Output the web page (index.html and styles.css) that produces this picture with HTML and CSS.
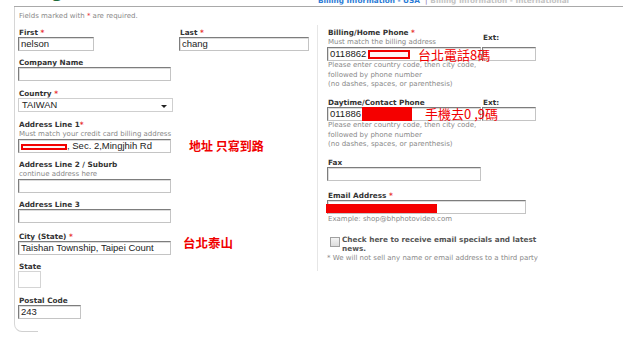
FILE: index.html
```html
<!DOCTYPE html>
<html>
<head>
<meta charset="utf-8">
<link rel="stylesheet" href="styles.css">
</head>
<body>
<div class="topbar">
  <div class="title-slot"><span class="title">Billing</span></div>
  <div class="nav"><span class="nav-on">Billing Information - USA</span><span class="nav-sep">|</span><span class="nav-off">Billing Information - International</span></div>
</div>
<div class="panel">
  <div class="panel-body">
    <p class="note">Fields marked with <span class="req">*</span> are required.</p>
    <div class="cols">
      <div class="col-left">
        <div class="name-row">
          <div class="field w-first-slot">
            <div class="lbl">First <span class="req">*</span></div>
            <div class="inp w-first">nelson</div>
          </div>
          <div class="field">
            <div class="lbl">Last <span class="req">*</span></div>
            <div class="inp w-last">chang</div>
          </div>
        </div>
        <div class="field mb9">
          <div class="lbl">Company Name</div>
          <div class="inp w-wide"></div>
        </div>
        <div class="field mb9">
          <div class="lbl">Country <span class="req">*</span></div>
          <div class="sel"><span>TAIWAN</span><span class="arrow"></span></div>
        </div>
        <div class="field ann-host">
          <div class="lbl">Address Line 1<span class="req">*</span></div>
          <div class="hint">Must match your credit card billing address</div>
          <div class="inp w-wide"><span class="redact-box addr-box"></span>, Sec. 2,Mingjhih Rd</div>
          <span class="ann ann-bold ann-addr">地址 只寫到路</span>
        </div>
        <div class="field">
          <div class="lbl">Address Line 2 / Suburb</div>
          <div class="hint">continue address here</div>
          <div class="inp w-wide"></div>
        </div>
        <div class="field mb10">
          <div class="lbl">Address Line 3</div>
          <div class="inp w-wide"></div>
        </div>
        <div class="field ann-host">
          <div class="lbl">City (State) <span class="req">*</span></div>
          <div class="inp w-wide">Taishan Township, Taipei Count</div>
          <span class="ann ann-bold ann-city">台北泰山</span>
        </div>
        <div class="field mb9">
          <div class="lbl">State</div>
          <div class="inp-light"></div>
        </div>
        <div class="field mb0">
          <div class="lbl">Postal Code</div>
          <div class="inp w-postal">243</div>
        </div>
      </div>
      <div class="col-right">
        <div class="rfield ann-host">
          <div class="phone-row">
            <div class="phone-main">
              <div class="lbl">Billing/Home Phone <span class="req">*</span></div>
              <div class="hint">Must match the billing address</div>
              <div class="inp w-phone">0118862<span class="redact-box phone-box"></span></div>
            </div>
            <div class="phone-ext">
              <div class="lbl ext-lbl-a">Ext:</div>
              <div class="inp w-ext"></div>
            </div>
          </div>
          <div class="hint2">Please enter country code, then city code,<br>followed by phone number<br>(no dashes, spaces, or parenthesis)</div>
          <span class="ann ann-phone">台北電話8碼</span>
        </div>
        <div class="rfield ann-host">
          <div class="phone-row">
            <div class="phone-main">
              <div class="lbl">Daytime/Contact Phone</div>
              <div class="inp w-phone">011886<span class="redact-fill day-fill"></span></div>
            </div>
            <div class="phone-ext">
              <div class="lbl">Ext:</div>
              <div class="inp w-ext"></div>
            </div>
          </div>
          <div class="hint2">Please enter country code, then city code,<br>followed by phone number<br>(no dashes, spaces, or parenthesis)</div>
          <span class="ann ann-mobile">手機去0 ,9碼</span>
        </div>
        <div class="rfield fax">
          <div class="lbl">Fax</div>
          <div class="inp w-phone"></div>
        </div>
        <div class="rfield email">
          <div class="lbl">Email Address <span class="req">*</span></div>
          <div class="inp w-email"><span class="redact-fill email-fill"></span></div>
          <div class="hint">Example: shop@bhphotovideo.com</div>
        </div>
        <div class="check-row">
          <span class="checkbox"></span>
          <span class="check-text">Check here to receive email specials and latest news.</span>
        </div>
        <div class="privacy">* We will not sell any name or email address to a third party</div>
      </div>
    </div>
  </div>
  <div class="foot"></div>
</div>
</body>
</html>
```

FILE: styles.css
```css
* { box-sizing: border-box; margin: 0; padding: 0; }
html, body { background: #fff; }
body {
  width: 640px;
  height: 348px;
  overflow: hidden;
  font-family: "DejaVu Sans", Verdana, sans-serif;
  color: #333;
}

/* top bar, mostly cut off */
.topbar {
  height: 6px;
  overflow: hidden;
  display: flex;
  align-items: flex-end;
}
.title-slot {
  flex: 0 0 318px;
  padding-left: 6px;
  margin-bottom: 4.5px;
}
.title {
  font-size: 16px;
  line-height: 16px;
  font-weight: bold;
  color: #1e6b3c;
}
.nav {
  font-size: 7.3px;
  line-height: 9px;
  font-weight: bold;
  white-space: nowrap;
  margin-bottom: 1.5px;
}
.nav-on { color: #2b7bd6; }
.nav-sep { color: #8a6db0; font-weight: normal; margin: 0 3px 0 5px; }
.nav-off { color: #c4c4c4; }

/* panel */
.panel {
  margin-left: 14px;
  width: 609px;
  border-top: 1px solid #a9a9a9;
}
.panel-body {
  border-left: 1px solid #d6d6d6;
}
.foot {
  width: 24px;
  height: 13px;
  border-left: 1px solid #d6d6d6;
  border-bottom: 1px solid #d0d0d0;
  border-bottom-left-radius: 8px;
}
.note {
  font-size: 7px;
  line-height: 8px;
  color: #888;
  padding: 5px 0 0 4px;
  margin-bottom: 5px;
}
.req { color: #e83030; }

.cols { display: flex; }
.col-left {
  width: 302px;
  padding: 4px 0 0 3px;
}
.col-right {
  flex: 1;
  align-self: flex-start;
  border-left: 1px solid #e6e6e6;
  padding: 4px 0 8px 9px;
}

.lbl {
  font-size: 7.3px;
  line-height: 8px;
  font-weight: bold;
  color: #333;
  padding-left: 1px;
  white-space: nowrap;
}
.hint {
  font-size: 7px;
  line-height: 10px;
  color: #888;
  padding-left: 1px;
  white-space: nowrap;
}
.hint2 {
  font-size: 7px;
  line-height: 9.5px;
  color: #888;
  padding-left: 1px;
  white-space: nowrap;
}

.field { margin-bottom: 8px; }
.mb9 { margin-bottom: 9px; }
.mb10 { margin-bottom: 10px; }
.mb0 { margin-bottom: 0; }
.name-row { display: flex; margin-bottom: 8px; }
.name-row .field { margin-bottom: 0; }
.w-first-slot { width: 161px; }

.inp {
  height: 14px;
  border: 1px solid #c4c4c4;
  border-top-color: #7d7d7d;
  border-left-color: #7d7d7d;
  box-shadow: inset 1px 1px 0 #dcdcdc;
  font-family: "Liberation Sans", Arial, sans-serif;
  font-size: 9.5px;
  line-height: 12px;
  padding-left: 2px;
  color: #222;
  white-space: nowrap;
  overflow: visible;
  display: flex;
  align-items: center;
  background: #fff;
}
.inp-light {
  width: 23px;
  height: 17px;
  border: 1px solid #d4d4d4;
  background: #fff;
}
.w-first { width: 76px; }
.w-last { width: 130px; }
.w-wide { width: 153px; }
.w-postal { width: 63px; }
.w-phone { width: 154px; }
.w-ext { width: 54px; }
.w-email { width: 199px; }

.sel {
  width: 155px;
  height: 14px;
  border: 1px solid #cfcfcf;
  background: #fff;
  font-family: "Liberation Sans", Arial, sans-serif;
  font-size: 9.3px;
  line-height: 12px;
  padding: 0 5px 0 3px;
  color: #222;
  display: flex;
  justify-content: space-between;
  align-items: center;
}
.arrow {
  width: 0;
  height: 0;
  border-left: 3px solid transparent;
  border-right: 3px solid transparent;
  border-top: 3px solid #222;
  margin-top: 2px;
}

/* redactions */
.redact-box {
  display: inline-block;
  border: 2px solid #f20000;
  background: #fff4f4;
}
.addr-box { width: 46px; height: 6px; margin-top: 1px; }
.phone-box { width: 42px; height: 9px; margin-left: 2px; margin-top: 1px; }
.redact-fill {
  display: inline-block;
  background: #f50000;
}
.day-fill { width: 50px; height: 14px; margin-left: 1px; }
.email-fill { width: 111px; height: 9px; margin-left: -4px; margin-top: 3px; }

/* annotations drawn over the screenshot */
.ann-host { position: relative; }
.ann {
  position: absolute;
  font-family: "Noto Sans CJK TC", "Noto Sans CJK SC", sans-serif;
  color: #f00000;
  white-space: nowrap;
  line-height: 13px;
}
.ann-bold { font-weight: bold; font-size: 12px; }
.ann-addr { left: 171px; top: 17.5px; }
.ann-city { left: 165px; top: 2.5px; font-size: 12.5px; }
.ann-phone { left: 91px; top: 18.5px; font-size: 13px; }
.ann-mobile { left: 98px; top: 8px; font-size: 13px; }

/* right column */
.phone-row { display: flex; align-items: flex-end; }
.phone-main { width: 155px; }
.phone-ext { width: 54px; }
.ext-lbl-a { margin-bottom: 5px; }
.rfield { margin-bottom: 9.5px; }
.rfield.fax { margin-bottom: 11px; }
.rfield.email { margin-bottom: 10.5px; }

.check-row {
  display: flex;
  align-items: flex-start;
}
.checkbox {
  flex: 0 0 10px;
  width: 10px;
  height: 10px;
  margin: 2px 2px 0 3px;
  border: 1px solid #a0a0a0;
  background: linear-gradient(#f4f4f4, #dcdcdc);
}
.check-text {
  font-size: 7.3px;
  line-height: 9.5px;
  font-weight: bold;
  color: #555;
  width: 210px;
}
.privacy {
  font-size: 7px;
  line-height: 9.5px;
  color: #888;
  white-space: nowrap;
}
```
